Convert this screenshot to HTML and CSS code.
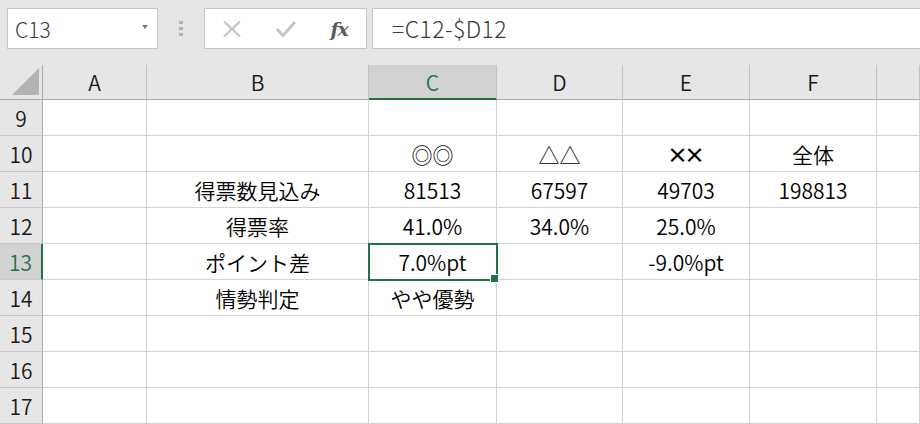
FILE: index.html
```html
<!DOCTYPE html>
<html lang="ja">

<head>
    <meta charset="UTF-8">
    <title>Sheet1</title>
    <link rel="stylesheet" href="styles.css">
</head>

<body>
    <div class="toolbar">
        <div class="name-box">
            <span>C13</span>
            <span class="caret"></span>
        </div>
        <div class="grip">
            <span></span><span></span><span></span>
        </div>
        <div class="fx-buttons">
            <span class="fx-btn">
                <svg width="20" height="18" viewBox="0 0 20 18">
                    <path d="M2 1.5 L18 16.5 M18 1.5 L2 16.5" stroke="#c4c4c4" stroke-width="2.2" fill="none" />
                </svg>
            </span>
            <span class="fx-btn">
                <svg width="22" height="18" viewBox="0 0 22 18">
                    <path d="M2 9 L8 15.5 L20 2" stroke="#c4c4c4" stroke-width="3" fill="none" />
                </svg>
            </span>
            <span class="fx-btn fx-label">fx</span>
        </div>
        <div class="formula">=C12-$D12</div>
    </div>

    <div class="sheet">
        <!-- column headers -->
        <div class="corner"><span class="corner-tri"></span></div>
        <div class="col-head">A</div>
        <div class="col-head">B</div>
        <div class="col-head active">C</div>
        <div class="col-head">D</div>
        <div class="col-head">E</div>
        <div class="col-head">F</div>
        <div class="col-head"></div>

        <div class="row-head">9</div>
        <div class="cell"></div><div class="cell"></div><div class="cell"></div><div class="cell"></div><div class="cell"></div><div class="cell"></div><div class="cell"></div>

        <div class="row-head">10</div>
        <div class="cell"></div><div class="cell"></div>
        <div class="cell">◎◎</div>
        <div class="cell">△△</div>
        <div class="cell cross">××</div>
        <div class="cell">全体</div>
        <div class="cell"></div>

        <div class="row-head">11</div>
        <div class="cell"></div>
        <div class="cell">得票数見込み</div>
        <div class="cell">81513</div>
        <div class="cell">67597</div>
        <div class="cell">49703</div>
        <div class="cell">198813</div>
        <div class="cell"></div>

        <div class="row-head">12</div>
        <div class="cell"></div>
        <div class="cell">得票率</div>
        <div class="cell">41.0%</div>
        <div class="cell">34.0%</div>
        <div class="cell">25.0%</div>
        <div class="cell"></div>
        <div class="cell"></div>

        <div class="row-head active">13</div>
        <div class="cell"></div>
        <div class="cell">ポイント差</div>
        <div class="cell selected">7.0%pt</div>
        <div class="cell"></div>
        <div class="cell">-9.0%pt</div>
        <div class="cell"></div>
        <div class="cell"></div>

        <div class="row-head">14</div>
        <div class="cell"></div>
        <div class="cell">情勢判定</div>
        <div class="cell">やや優勢</div>
        <div class="cell"></div><div class="cell"></div><div class="cell"></div><div class="cell"></div>

        <div class="row-head">15</div>
        <div class="cell"></div><div class="cell"></div><div class="cell"></div><div class="cell"></div><div class="cell"></div><div class="cell"></div><div class="cell"></div>

        <div class="row-head">16</div>
        <div class="cell"></div><div class="cell"></div><div class="cell"></div><div class="cell"></div><div class="cell"></div><div class="cell"></div><div class="cell"></div>

        <div class="row-head">17</div>
        <div class="cell"></div><div class="cell"></div><div class="cell"></div><div class="cell"></div><div class="cell"></div><div class="cell"></div><div class="cell"></div>
    </div>
</body>

</html>
```

FILE: styles.css
```css
* {
    box-sizing: border-box;
}

body {
    margin: 0;
    width: 920px;
    height: 424px;
    overflow: hidden;
    background: #ffffff;
    font-family: "Noto Sans CJK JP", "Noto Sans", sans-serif;
    font-weight: 350;
    color: #000;
}

/* formula bar */

.toolbar {
    display: flex;
    align-items: flex-start;
    height: 65px;
    padding: 8px 0 0 7px;
    background: #e6e6e6;
}

.name-box {
    display: flex;
    align-items: center;
    justify-content: space-between;
    width: 151px;
    height: 41px;
    padding: 0 9px 0 7px;
    background: #fff;
    border: 1px solid #c6c6c6;
    font-size: 21px;
    font-weight: 300;
    color: #3a3a3a;
}

.caret {
    width: 0;
    height: 0;
    margin-top: -4px;
    border-left: 3.5px solid transparent;
    border-right: 3.5px solid transparent;
    border-top: 4px solid #777;
}

.grip {
    display: flex;
    flex-direction: column;
    align-items: center;
    gap: 3px;
    width: 46px;
    padding-top: 13px;
}

.grip span {
    width: 4px;
    height: 3px;
    background: #b3b3b3;
}

.fx-buttons {
    display: flex;
    width: 163px;
    height: 41px;
    background: #fff;
    border: 1px solid #c6c6c6;
}

.fx-btn {
    display: flex;
    align-items: center;
    justify-content: center;
    width: 54px;
}

.fx-label {
    font-family: "DejaVu Serif", "Liberation Serif", serif;
    font-style: italic;
    font-weight: bold;
    font-size: 19px;
    color: #5a5a5a;
    letter-spacing: -1px;
}

.formula {
    flex: 1;
    height: 41px;
    margin-left: 5px;
    padding-left: 19px;
    line-height: 38px;
    background: #fff;
    border: 1px solid #c6c6c6;
    border-right: none;
    font-size: 23px;
    font-weight: 300;
    letter-spacing: 0.4px;
    color: #3a3a3a;
}

/* grid */

.sheet {
    display: grid;
    grid-template-columns: 43px 104px 222px 128px 126px 127px 127px 43px;
    grid-template-rows: 35px repeat(9, 36px);
    font-size: 21px;
}

.corner,
.col-head {
    position: relative;
    background: #e6e6e6;
    border-bottom: 1px solid #ababab;
}

.corner {
    border-right: 1px solid #ababab;
}

.corner-tri {
    position: absolute;
    left: 12px;
    bottom: 4px;
    width: 0;
    height: 0;
    border-left: 27px solid transparent;
    border-bottom: 27px solid #b4b4b4;
}

.col-head {
    display: flex;
    align-items: center;
    justify-content: center;
    border-right: 1px solid #c3c3c3;
    color: #1a1a1a;
}

.col-head.active {
    background: #d2d2d2;
    color: #217346;
    border-bottom: 2px solid #217346;
}

.row-head {
    display: flex;
    align-items: center;
    justify-content: center;
    background: #e6e6e6;
    border-right: 1px solid #ababab;
    border-bottom: 1px solid #cbcbcb;
    color: #1a1a1a;
}

.row-head.active {
    background: #d2d2d2;
    color: #217346;
    border-right: 2px solid #217346;
}

.cell {
    display: flex;
    align-items: center;
    justify-content: center;
    border-right: 1px solid #d4d4d4;
    border-bottom: 1px solid #d4d4d4;
    white-space: nowrap;
}

.cell.cross {
    font-weight: 700;
    letter-spacing: -4px;
    padding-right: 4px;
}

.cell.selected {
    position: relative;
    z-index: 1;
    outline: 2px solid #217346;
    outline-offset: -1px;
}

.cell.selected::after {
    content: "";
    position: absolute;
    right: -3px;
    bottom: -4px;
    width: 7px;
    height: 7px;
    background: #217346;
    border: 1px solid #fff;
}
```
